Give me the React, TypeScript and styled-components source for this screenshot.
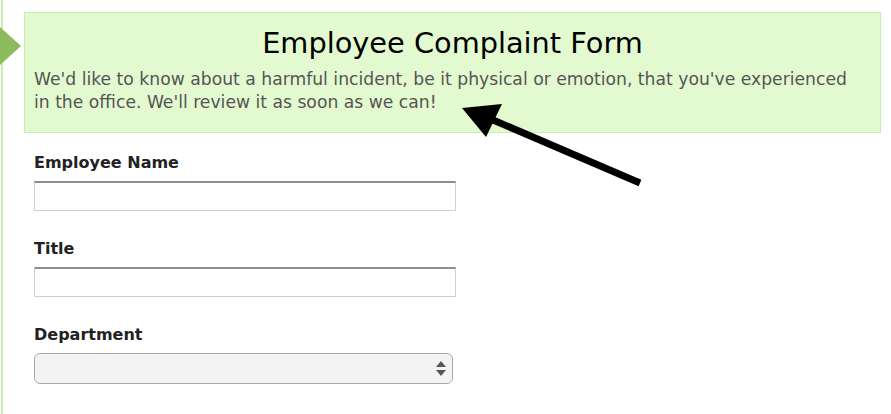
import React from 'react';
import styled, { createGlobalStyle } from 'styled-components';

const GlobalStyle = createGlobalStyle`
  html, body {
    margin: 0;
    padding: 0;
    background: #fff;
  }

  body {
    font-family: "DejaVu Sans", "Liberation Sans", sans-serif;
    color: #222;
  }
`;

const Page = styled.div`
  position: relative;
  display: flex;
  width: 891px;
  height: 414px;
  overflow: hidden;
`;

const Rail = styled.div`
  position: relative;
  box-sizing: border-box;
  flex: 0 0 24px;
  border-left: 1px solid #fff;
  box-shadow: inset 2px 0 0 #cdecb3;
`;

const RailMarker = styled.div`
  position: absolute;
  top: 27px;
  left: -1px;
  width: 0;
  height: 0;
  border-top: 19.5px solid transparent;
  border-bottom: 19.5px solid transparent;
  border-left: 21px solid #8cbb5c;
`;

const Main = styled.main`
  flex: 0 0 857px;
  padding-top: 12px;
`;

const Intro = styled.header`
  box-sizing: border-box;
  height: 121px;
  padding: 13px 9px 0;
  background: #e3f9d0;
  border: 1.5px solid #c8eeac;
`;

const Heading = styled.h1`
  margin: 0 0 7px;
  font-size: 28.8px;
  line-height: 35px;
  font-weight: normal;
  text-align: center;
  color: #000;
`;

const Blurb = styled.p`
  margin: 0;
  padding-right: 8px;
  font-size: 17.2px;
  line-height: 23px;
  color: #555;
`;

const Fields = styled.form`
  display: flex;
  flex-direction: column;
  gap: 28.5px;
  padding: 20px 0 0 10px;
`;

const Field = styled.div`
  display: flex;
  flex-direction: column;
  gap: 7.5px;
`;

const Label = styled.label`
  font-size: 16px;
  line-height: 20px;
  font-weight: bold;
  color: #222;
`;

const TextInput = styled.input`
  box-sizing: border-box;
  width: 422px;
  height: 30px;
  margin: 0;
  padding: 0 6px;
  border: 1px solid #cfcfcf;
  border-top: 2px solid #8e8e8e;
  border-radius: 0;
  background: #fff;
  font: inherit;
  outline: none;
`;

const SelectWrap = styled.div`
  position: relative;
  width: 419px;
  height: 31px;
`;

const Select = styled.select`
  box-sizing: border-box;
  width: 100%;
  height: 100%;
  margin: 0;
  padding: 0 24px 0 8px;
  appearance: none;
  border: 1px solid #a9a9a9;
  border-radius: 6px;
  background: #f3f3f3;
  font: inherit;
  outline: none;
`;

const Spinner = styled.svg`
  position: absolute;
  top: 8px;
  right: 7px;
  pointer-events: none;
`;

const Annotation = styled.svg`
  position: absolute;
  inset: 0;
  pointer-events: none;
`;

const App: React.FC = () => (
  <>
    <GlobalStyle />
    <Page>
      <Rail>
        <RailMarker />
      </Rail>
      <Main>
        <Intro>
          <Heading>Employee Complaint Form</Heading>
          <Blurb>
            We&apos;d like to know about a harmful incident, be it physical or emotion, that you&apos;ve experienced
            in the office. We&apos;ll review it as soon as we can!
          </Blurb>
        </Intro>
        <Fields>
          <Field>
            <Label htmlFor="employee-name">Employee Name</Label>
            <TextInput id="employee-name" type="text" />
          </Field>
          <Field>
            <Label htmlFor="title">Title</Label>
            <TextInput id="title" type="text" />
          </Field>
          <Field>
            <Label htmlFor="department">Department</Label>
            <SelectWrap>
              <Select id="department" defaultValue="">
                <option value="" />
              </Select>
              <Spinner width="10" height="15" viewBox="0 0 10 15">
                <polygon points="5,0 10,6 0,6" fill="#555" />
                <polygon points="0,9 10,9 5,15" fill="#555" />
              </Spinner>
            </SelectWrap>
          </Field>
        </Fields>
      </Main>
      <Annotation width="891" height="414" viewBox="0 0 891 414">
        <line x1="493" y1="120" x2="640" y2="183" stroke="#000" strokeWidth="7" />
        <polygon points="462,108 502,104 486,137" fill="#000" />
      </Annotation>
    </Page>
  </>
);

export default App;
